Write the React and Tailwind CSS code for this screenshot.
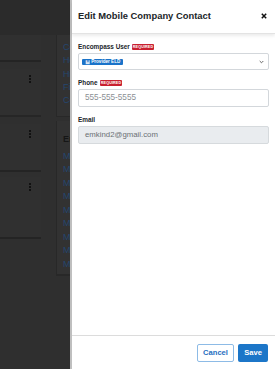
import React from 'react';

const font = { fontFamily: '"Liberation Sans", Arial, sans-serif' };

const Kebab = () => (
  <div className="flex flex-col gap-[1px] w-[2px]">
    <span className="w-[2px] h-[2px] bg-[#111]" />
    <span className="w-[2px] h-[2px] bg-[#111]" />
    <span className="w-[2px] h-[2px] bg-[#111]" />
  </div>
);

// tiny text is drawn at double size and scaled down, the browser clamps very small fonts
const Required = () => (
  <span className="relative inline-block w-[22px] h-[6px] bg-[#c9202f] rounded-[1px] overflow-hidden">
    <span className="absolute left-1/2 top-1/2 -translate-x-1/2 -translate-y-1/2 scale-50 text-[7.4px] font-bold text-white leading-none whitespace-nowrap tracking-[0.2px]">
      REQUIRED
    </span>
  </span>
);

const Chip = () => (
  <span className="relative inline-block w-[41px] h-[6px] bg-[#1a73c9] rounded-[1px] overflow-hidden">
    <span className="absolute left-1/2 top-1/2 -translate-x-1/2 -translate-y-1/2 scale-50 flex items-center gap-[3px] whitespace-nowrap">
      <span className="w-[8px] h-[8px] bg-[#d6e6f6] text-[#1a73c9] text-[9px] font-bold leading-none flex items-center justify-center">×</span>
      <span className="text-[9.2px] font-bold text-white leading-none">Provider ELD</span>
    </span>
  </span>
);

const BackgroundPage = () => (
  <div className="w-[275px] h-[369px] bg-[#2f2f2f] flex flex-col">
    <div className="h-[35px] bg-[#2b2b2b] shrink-0" />
    <div className="flex flex-1">
      <div className="w-[41px] flex flex-col">
        <div className="h-[27px] bg-[#303030] border-b-2 border-[#242424]" />
        <div className="mt-[7px] h-[48px] bg-[#303030] border-b-2 border-[#262626] pt-[6px] flex justify-end pr-[10px]">
          <div className="h-fit"><Kebab /></div>
        </div>
        <div className="mt-[7px] h-[48px] bg-[#303030] border-b-2 border-[#242424] pt-[6px] flex justify-end pr-[10px]">
          <div className="h-fit"><Kebab /></div>
        </div>
        <div className="mt-[5px] h-[62px] bg-[#303030] border-b-2 border-[#242424] pt-[6px] flex justify-end pr-[10px]">
          <div className="h-fit"><Kebab /></div>
        </div>
      </div>
      {/* only the strip left of the drawer is ever visible */}
      <div className="ml-[15px] w-[16px] overflow-hidden flex flex-col">
        <div className="h-[82px] bg-[#323232] border-b border-l border-[#282828] pl-[6px] pt-[8px] flex flex-col gap-[4px] text-[9px] leading-[9.3px] text-[#254670] whitespace-nowrap">
          <span>Co</span>
          <span>Ho</span>
          <span>Hi</span>
          <span>Fi</span>
          <span>Co</span>
        </div>
        <div className="mt-[4px] h-[155px] bg-[#323232] border-b-2 border-l border-[#282828] pl-[6px] pt-[12px] flex flex-col text-[9px] leading-[13.5px] text-[#254670] whitespace-nowrap">
          <span className="font-bold text-[#161616] mb-[3px]">Em</span>
          <span>Ma</span>
          <span>Ma</span>
          <span>Mi</span>
          <span>Mi</span>
          <span>Mo</span>
          <span>Ma</span>
          <span>Ma</span>
          <span>Mi</span>
          <span>Mi</span>
        </div>
      </div>
    </div>
  </div>
);

const Field = ({ label, required, children }) => (
  <div className="flex flex-col">
    <div className="flex items-center gap-[2px] h-[8px]">
      <span className="text-[6.4px] font-bold text-[#212529] leading-none">{label}</span>
      {required && <Required />}
    </div>
    {children}
  </div>
);

export default function App() {
  return (
    <div className="relative w-[275px] h-[369px] overflow-hidden" style={font}>
      <BackgroundPage />
      <div className="absolute top-0 right-0 bottom-0 w-[205px] bg-white border-l-2 border-[#bfbfbf] flex flex-col">
        <div className="h-[34px] shrink-0 flex items-center justify-between pl-[6px] pr-[7px] pb-[1px] border-b border-[#e3e3e3] shadow-[0_2px_3px_rgba(0,0,0,0.08)]">
          <h2 className="text-[9.4px] font-bold text-[#212529] leading-none">Edit Mobile Company Contact</h2>
          <svg width="6" height="6" viewBox="0 0 6 6" className="mr-[1px]">
            <path d="M0.8 0.8 L5.2 5.2 M5.2 0.8 L0.8 5.2" stroke="#111" strokeWidth="1.5" />
          </svg>
        </div>
        <div className="flex-1 pl-[6px] pr-[6px] pt-[9px] flex flex-col gap-[9px]">
          <Field label="Encompass User" required>
            <div className="mt-[2px] h-[17px] border border-[#d3d7db] rounded-[2px] flex items-center justify-between pl-[3px] pr-[4px]">
              <Chip />
              <svg width="5" height="4" viewBox="0 0 5 4">
                <path d="M0.7 1 L2.5 2.8 L4.3 1" fill="none" stroke="#555" strokeWidth="0.9" />
              </svg>
            </div>
          </Field>
          <Field label="Phone" required>
            <div className="mt-[2px] h-[18px] border border-[#d3d7db] rounded-[2px] flex items-center pl-[6px] text-[8.2px] text-[#8a8f94]">
              555-555-5555
            </div>
          </Field>
          <Field label="Email">
            <div className="mt-[2px] h-[18px] border border-[#d6dadd] bg-[#e9ecef] rounded-[2px] flex items-center pl-[6px] text-[7.8px] text-[#6b7075]">
              emkind2@gmail.com
            </div>
          </Field>
        </div>
        <div className="h-[34px] shrink-0 border-t border-[#dcdcdc] flex items-start justify-end gap-[4px] pt-[8px] pr-[7px]">
          <button className="h-[18px] w-[37px] border border-[#8dbbe6] rounded-[2px] bg-white text-[#1f6fbf] text-[7.6px] font-bold">
            Cancel
          </button>
          <button className="h-[18px] w-[30px] rounded-[2px] bg-[#1c76c8] text-white text-[7.6px] font-bold">
            Save
          </button>
        </div>
      </div>
    </div>
  );
}
